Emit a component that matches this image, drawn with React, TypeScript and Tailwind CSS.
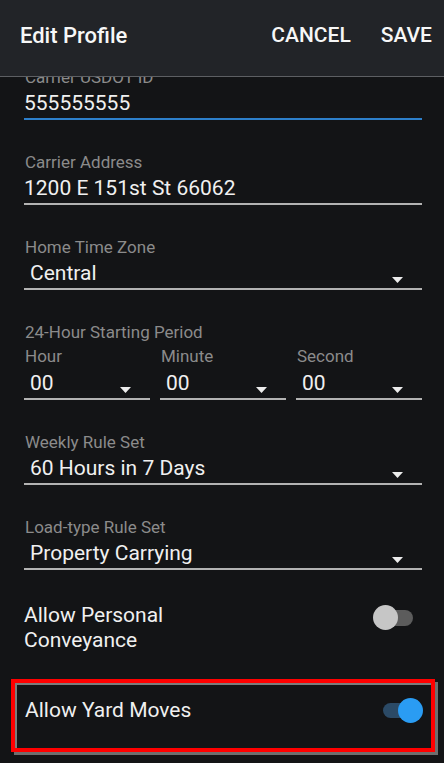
import React from 'react';

const Arrow: React.FC = () => (
  <svg width="11" height="6" viewBox="0 0 11 6" className="mb-[3px] shrink-0">
    <polygon points="0,0 11,0 5.5,6" fill="#ececec" />
  </svg>
);

const Label: React.FC<{ children: React.ReactNode }> = ({ children }) => (
  <div className="text-[17px] leading-[19px] text-[#8b8b8b] pl-[1px]">{children}</div>
);

const Underline: React.FC<{ active?: boolean }> = ({ active }) => (
  <div className={active ? 'mt-[2px] h-[2px] bg-[#2d7fca]' : 'mt-[2px] h-[2px] bg-[#b3b3b3]'} />
);

const TextField: React.FC<{ label: string; value: string; active?: boolean }> = ({ label, value, active }) => (
  <div className="mb-[33px]">
    <Label>{label}</Label>
    <div className="mt-[4px] h-[25px] text-[21px] leading-[25px] text-[#f0f0f0]">{value}</div>
    <Underline active={active} />
  </div>
);

const SelectField: React.FC<{ label: string; value: string }> = ({ label, value }) => (
  <div className="mb-[33px]">
    <Label>{label}</Label>
    <div className="mt-[4px] h-[25px] flex items-end justify-between pl-[6px] pr-[19px]">
      <span className="text-[21px] leading-[25px] text-[#f0f0f0]">{value}</span>
      <Arrow />
    </div>
    <Underline />
  </div>
);

const SmallSelect: React.FC<{ label: string; value: string }> = ({ label, value }) => (
  <div>
    <Label>{label}</Label>
    <div className="mt-[5px] h-[25px] flex items-end justify-between pl-[6px] pr-[19px]">
      <span className="text-[21px] leading-[25px] text-[#f0f0f0]">{value}</span>
      <Arrow />
    </div>
    <Underline />
  </div>
);

const Switch: React.FC<{ on?: boolean }> = ({ on }) => (
  <div className="relative w-[50px] h-[25px] shrink-0">
    <div
      className={
        on
          ? 'absolute left-[10px] top-[5px] w-[30px] h-[15px] rounded-full bg-[#2b4a66]'
          : 'absolute left-[10px] top-[5px] w-[30px] h-[16px] rounded-full bg-[#5c5c5c]'
      }
    />
    <div
      className={
        on
          ? 'absolute right-0 top-0 w-[25px] h-[25px] rounded-full bg-[#2a9cf3]'
          : 'absolute left-0 top-0 w-[25px] h-[25px] rounded-full bg-[#c6c6c6]'
      }
    />
  </div>
);

const App: React.FC = () => {
  return (
    <div className="w-[444px] h-[763px] flex flex-col overflow-hidden bg-[#131416] font-[Roboto,sans-serif]">
      {/* Toolbar */}
      <div className="h-[77px] shrink-0 bg-[#222428] border-b border-[#5d5f63] flex items-start justify-between pt-[23px] pl-[20px] pr-[12px] text-[#f7f7f7]">
        <h1 className="text-[22px] leading-[25px] font-medium">Edit Profile</h1>
        <div className="flex gap-[30px] text-[21px] leading-[25px] font-medium">
          <span>CANCEL</span>
          <span>SAVE</span>
        </div>
      </div>

      {/* Form */}
      <div className="flex-1 overflow-hidden">
        <div className="-mt-[9px] pl-[24px] pr-[22px]">
          <TextField label="Carrier USDOT ID" value="555555555" active />
          <TextField label="Carrier Address" value="1200 E 151st St 66062" />
          <SelectField label="Home Time Zone" value="Central" />

          <div className="mb-[33px]">
            <Label>24-Hour Starting Period</Label>
            <div className="mt-[5px] grid grid-cols-3 gap-[10px]">
              <SmallSelect label="Hour" value="00" />
              <SmallSelect label="Minute" value="00" />
              <SmallSelect label="Second" value="00" />
            </div>
          </div>

          <SelectField label="Weekly Rule Set" value="60 Hours in 7 Days" />
          <SelectField label="Load-type Rule Set" value="Property Carrying" />

          <div className="flex items-start justify-between -mr-[1px]">
            <div className="text-[21px] leading-[25px] text-[#f0f0f0]">
              Allow Personal
              <br />
              Conveyance
            </div>
            <div className="mt-[2px]">
              <Switch />
            </div>
          </div>
        </div>

        <div className="mt-[26px] ml-[11px] w-[424px] border-[4px] border-[#ff0000] shadow-[inset_2px_2px_0_#7c7c7c,3px_3px_0_#6e6e6e] pt-[15px] pb-[25px] pl-[10px] pr-[8px] flex items-start justify-between">
          <span className="text-[21px] leading-[25px] text-[#f0f0f0]">Allow Yard Moves</span>
          <Switch on />
        </div>
      </div>
    </div>
  );
};

export default App;
